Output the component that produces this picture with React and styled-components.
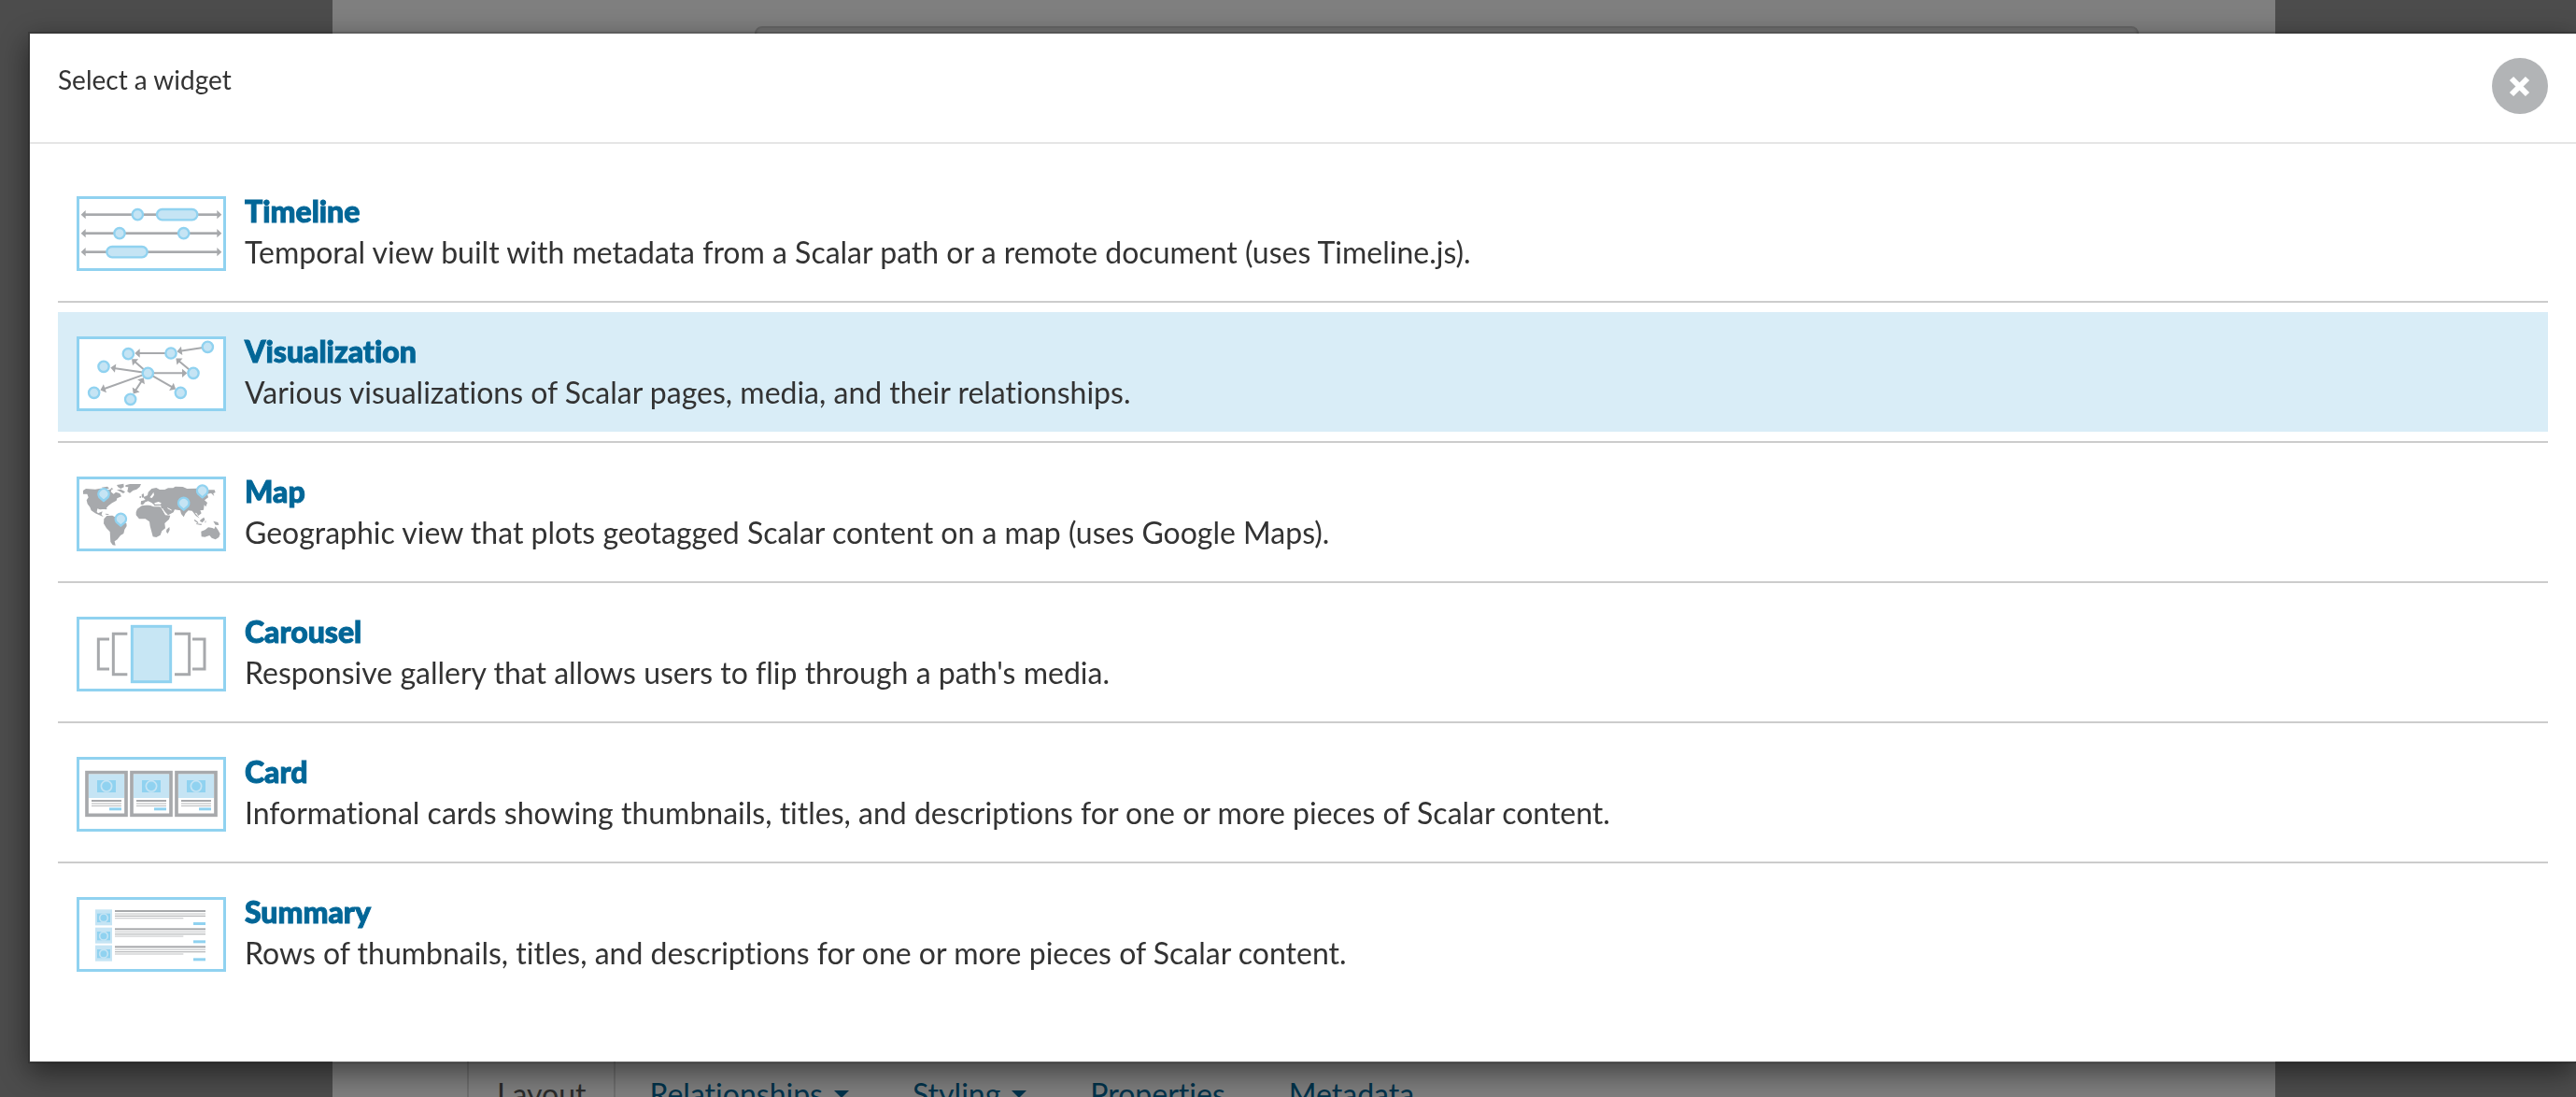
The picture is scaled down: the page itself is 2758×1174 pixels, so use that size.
import React from "react";
import styled, { createGlobalStyle } from "styled-components";

const GREY = "#a7a9ac";
const SKY = "#90d2f0";
const PALE = "#c5e4f4";

const GlobalStyle = createGlobalStyle`
  * { box-sizing: border-box; }
  body {
    margin: 0;
    background: #999;
    color: #333;
    font-family: Lato, "Liberation Sans", sans-serif;
    font-size: 32px;
    font-variant-ligatures: no-common-ligatures;
    line-height: 44px;
  }
`;

/* ---------- editor page behind the dialog ---------- */

const Page = styled.main`
  display: flex;
  flex-direction: column;
  height: 100vh;
  margin: 0 322px 0 356px;
  padding: 28px 146px 0 144px;
  overflow: hidden;
  background: #fff;
`;

const Field = styled.div`
  display: grid;
  flex: 1;
  padding-left: 308px;
`;

const TextArea = styled.textarea`
  width: 100%;
  border: 2px solid #ccc;
  border-radius: 8px;
  background: #eee;
  box-shadow: inset 0 2px 2px rgba(0, 0, 0, 0.08);
  resize: none;
`;

const Tabs = styled.nav`
  display: flex;
  flex: none;
  gap: 4px;
  height: 88px;
  margin-top: 40px;
  margin-bottom: -40px;
`;

const Tab = styled.a`
  display: flex;
  align-items: center;
  gap: 12px;
  padding: 0 30px;
  border: 2px solid ${(p) => (p.$active ? "#ddd" : "transparent")};
  border-bottom: 0;
  border-radius: 8px 8px 0 0;
  color: ${(p) => (p.$active ? "#555" : "#026697")};
  text-decoration: none;
`;

const Caret = styled.span`
  border: 8px solid transparent;
  border-top-color: currentColor;
  border-bottom: 0;
`;

/* ---------- dialog ---------- */

const Backdrop = styled.div`
  position: fixed;
  inset: 0;
  padding: 34px 0 0 30px;
  background: rgba(0, 0, 0, 0.5);
`;

const Dialog = styled.section`
  border: 2px solid rgba(0, 0, 0, 0.2);
  border-right: 0;
  background: #fff;
  background-clip: padding-box;
  box-shadow: 0 10px 30px rgba(0, 0, 0, 0.5);
`;

const Header = styled.header`
  display: flex;
  align-items: flex-start;
  justify-content: space-between;
  padding: 26px 30px 30px;
  border-bottom: 2px solid #e5e5e5;
`;

const Title = styled.h1`
  margin: 0;
  font-size: 28px;
  font-weight: 400;
  line-height: 46px;
`;

const CloseButton = styled.button`
  display: grid;
  place-items: center;
  width: 60px;
  height: 60px;
  padding: 0;
  border: 0;
  border-radius: 50%;
  background: #b2b4b6;
`;

const List = styled.ul`
  margin: 0;
  padding: 30px 30px 74px;
  list-style: none;
`;

const Item = styled.li`
  & + & {
    margin-top: 10px;
    padding-top: 10px;
    border-top: 2px solid #ccc;
  }
`;

const Option = styled.button`
  display: flex;
  align-items: flex-start;
  gap: 20px;
  width: 100%;
  padding: 20px;
  border: 0;
  background: ${(p) => (p.$highlighted ? "#d9edf7" : "transparent")};
  color: inherit;
  font: inherit;
  font-variant-ligatures: inherit;
  text-align: left;
`;

const Thumb = styled.svg`
  flex: none;
  width: 160px;
  height: 80px;
  margin-top: 6px;
  border: 3px solid ${SKY};
  background: #fff;
`;

const Name = styled.strong`
  display: block;
  color: #026697;
  font-weight: 900;
  -webkit-text-stroke: 1px currentColor;
`;

const Description = styled.span`
  display: block;
`;

/* ---------- thumbnails, drawn on a 462 x 222 board ---------- */

const Board = ({ children }) => (
  <Thumb viewBox="45 54 462 222" aria-hidden="true">
    {children}
  </Thumb>
);

const Dot = ({ x, y }) => (
  <circle cx={x} cy={y} r="17" fill={PALE} stroke={SKY} strokeWidth="7" />
);

const Arrow = ({ x1, y1, x2, y2, both }) => {
  const angle = (Math.atan2(y2 - y1, x2 - x1) * 180) / Math.PI;
  return (
    <g fill={GREY}>
      <line x1={x1} y1={y1} x2={x2} y2={y2} stroke={GREY} strokeWidth="6" />
      <path d="M5 0L-11 -14V14Z" transform={`translate(${x2} ${y2}) rotate(${angle})`} />
      {both && <path d="M5 0L-11 -14V14Z" transform={`translate(${x1} ${y1}) rotate(${angle + 180})`} />}
    </g>
  );
};

const TimelineArt = () => (
  <Board>
    {[104, 164, 224].map((y) => (
      <g key={y} fill={GREY}>
        <rect x="60" y={y - 4} width="430" height="8" />
        <path d={`M50 ${y}L65 ${y - 14}V${y + 14}ZM502 ${y}L487 ${y - 14}V${y + 14}Z`} />
      </g>
    ))}
    <Dot x={232} y={104} />
    <Dot x={174} y={164} />
    <Dot x={380} y={164} />
    <g fill={PALE} stroke={SKY} strokeWidth="7">
      <rect x="294" y="87" width="130" height="34" rx="17" />
      <rect x="133" y="207" width="130" height="34" rx="17" />
    </g>
  </Board>
);

const VisualizationArt = () => (
  <Board>
    <Arrow x1={457} y1={79} x2={363} y2={93} />
    <Arrow x1={339} y1={99} x2={228} y2={99} />
    <Arrow x1={411} y1={163} x2={359} y2={119} />
    <Arrow x1={265} y1={163} x2={217} y2={121} />
    <Arrow x1={265} y1={163} x2={150} y2={146} />
    <Arrow x1={265} y1={163} x2={117} y2={216} />
    <Arrow x1={249} y1={182} x2={221} y2={225} both />
    <Arrow x1={265} y1={163} x2={350} y2={212} />
    <Arrow x1={265} y1={163} x2={386} y2={163} />
    {[[457, 79], [339, 99], [202, 101], [123, 142], [92, 226], [209, 247], [370, 226], [411, 163], [265, 163]].map(
      ([x, y]) => <Dot key={`${x}-${y}`} x={x} y={y} />
    )}
  </Board>
);

const Pin = ({ x, y }) => (
  <path
    d={`M${x} ${y + 19}L${x - 14} ${y + 7}A17 17 0 1 1 ${x + 14} ${y + 7}Z`}
    fill={PALE}
    stroke={SKY}
    strokeWidth="7"
    strokeLinejoin="round"
  />
);

const MapArt = () => (
  <Board>
    <g fill={GREY}>
      {/* North America */}
      <path d="M57 90L66 84L96 86L113 83L128 88L142 87L150 82L146 94L155 101L162 95L175 99L180 109L166 115L164 122L150 130L138 139L129 149L111 151L103 148L101 158L105 163L119 157L116 167L122 174L116 172L96 163L83 154L79 143L71 133L68 121L74 112L70 101L57 101Z" />
      <path d="M116 80L135 77L141 83L126 85ZM146 81L154 84L149 88ZM165 72L187 68L188 79L178 84L169 79ZM165 88L178 86L192 94L186 99L174 92ZM117 143L135 148L130 151L117 148ZM128 164L138 165L140 168L130 167Z" />
      {/* Greenland */}
      <path d="M193 73L207 69H243L239 78L229 86L217 90L207 98L199 93L202 79L193 78Z" />
      {/* South America */}
      <path d="M124 181L133 171L151 170L163 177L170 188L196 195L197 204L190 215L187 228L177 234L167 247L158 253L161 266L152 265L145 255L143 222L132 211L123 196Z" />
      {/* Africa */}
      <path d="M231 149L245 139L270 136L284 142L304 142L313 154L321 169L337 170L333 182L319 195L321 211L310 220L305 233L292 240L281 238L276 219L272 204L270 190L257 181L237 181L227 169V159ZM325 215L334 207L335 216L329 228L324 223Z" />
      {/* Europe and Asia */}
      <path d="M242 134L243 124L257 120L250 112L264 105L266 95L277 84L292 81L303 87L319 87L330 82L346 82L353 77L377 78L391 84L423 83L447 88L479 88L482 96L475 99L478 108L468 98L456 101L459 112L447 121L456 129L451 142L446 136L444 152L433 154L437 163L427 171L421 162L416 161L424 170L431 179L419 171L407 155L395 154L386 163L380 175L372 165L369 154L351 151L347 160L330 169L321 160L307 145V138L286 139L278 130L266 124L257 127L249 136Z" />
      <path d="M245 103L251 99L253 111L246 113ZM239 108L244 109L242 114L238 113ZM435 150L440 148L438 153Z" />
      {/* Islands and Australia */}
      <path d="M415 182L427 192L426 196L414 187ZM434 184L445 176L448 184L440 193L432 188ZM475 188L490 192L493 201L482 200ZM448 189L452 187L450 195ZM420 196L439 197L436 201L420 198Z" />
      <path d="M436 221L449 216L459 208L472 210L478 213L482 205L490 216L497 229L493 240L482 247L470 242L463 234L448 239L437 238Z" />
    </g>
    <path d="M256 129L266 125L277 132L284 134L283 140L270 137L257 135ZM286 130L299 126L308 130L306 134L287 134ZM271 112L279 102L283 95L285 104L278 114Z" fill="#fff" />
    <path d="M311 147L322 166M328 146L341 153" stroke="#fff" strokeWidth="3" />
    <Pin x={123} y={104} />
    <Pin x={178} y={184} />
    <Pin x={380} y={133} />
    <Pin x={440} y={93} />
  </Board>
);

const CarouselArt = () => (
  <Board>
    <g fill="none" stroke={GREY} strokeWidth="9">
      <path d="M141 117H106V213H141M199 100H154V230H199M351 100H398V230H351M408 117H447V213H408" />
    </g>
    <rect x="214" y="76" width="124" height="178" fill="#c7e6f4" stroke={SKY} strokeWidth="9" />
  </Board>
);

const CardArt = () => (
  <Board>
    {[0, 144, 288].map((dx) => (
      <g key={dx} transform={`translate(${dx} 0)`}>
        <rect x="69" y="95" width="126" height="137" fill="#fff" stroke={GREY} strokeWidth="11" />
        <rect x="75" y="101" width="114" height="76" fill={PALE} />
        <rect x="102" y="120" width="60" height="39" fill={SKY} />
        <circle cx="132" cy="139" r="17" fill={SKY} stroke={PALE} strokeWidth="5" />
        <rect x="84" y="183" width="96" height="6" fill={GREY} />
        <rect x="84" y="192" width="96" height="6" fill="#d9dadb" />
        <rect x="84" y="201" width="96" height="3" fill="#b9bbbd" />
        <rect x="141" y="208" width="39" height="9" fill={SKY} />
      </g>
    ))}
  </Board>
);

const SummaryArt = () => (
  <Board>
    {[0, 58, 115].map((dy) => (
      <g key={dy} transform={`translate(0 ${dy})`}>
        <rect x="96" y="85" width="54" height="51" fill={PALE} />
        <rect x="102" y="98" width="42" height="28" fill={SKY} />
        <circle cx="123" cy="112" r="13" fill={SKY} stroke={PALE} strokeWidth="5" />
        <rect x="159" y="87" width="291" height="6" fill={GREY} />
        <rect x="159" y="97" width="291" height="4" fill="#d0d1d3" />
        <rect x="159" y="104" width="291" height="4" fill="#babcbe" />
        <rect x="159" y="111" width="220" height="4" fill="#d0d1d3" />
        <rect x="411" y="126" width="39" height="9" fill={SKY} />
      </g>
    ))}
  </Board>
);

const widgets = [
  {
    name: "Timeline",
    description: "Temporal view built with metadata from a Scalar path or a remote document (uses Timeline.js).",
    Art: TimelineArt,
  },
  {
    name: "Visualization",
    description: "Various visualizations of Scalar pages, media, and their relationships.",
    Art: VisualizationArt,
    highlighted: true,
  },
  {
    name: "Map",
    description: "Geographic view that plots geotagged Scalar content on a map (uses Google Maps).",
    Art: MapArt,
  },
  {
    name: "Carousel",
    description: "Responsive gallery that allows users to flip through a path's media.",
    Art: CarouselArt,
  },
  {
    name: "Card",
    description: "Informational cards showing thumbnails, titles, and descriptions for one or more pieces of Scalar content.",
    Art: CardArt,
  },
  {
    name: "Summary",
    description: "Rows of thumbnails, titles, and descriptions for one or more pieces of Scalar content.",
    Art: SummaryArt,
  },
];

const tabs = [
  { label: "Layout", active: true },
  { label: "Relationships", menu: true },
  { label: "Styling", menu: true },
  { label: "Properties" },
  { label: "Metadata" },
];

export default function App() {
  return (
    <>
      <GlobalStyle />
      <Page>
        <Field>
          <TextArea aria-label="Content" />
        </Field>
        <Tabs>
          {tabs.map((tab) => (
            <Tab key={tab.label} href="#" $active={tab.active}>
              {tab.label}
              {tab.menu && <Caret />}
            </Tab>
          ))}
        </Tabs>
      </Page>
      <Backdrop>
        <Dialog role="dialog" aria-modal="true" aria-labelledby="dialog-title">
          <Header>
            <Title id="dialog-title">Select a widget</Title>
            <CloseButton type="button" aria-label="Close">
              <svg width="24" height="24" viewBox="0 0 24 24" aria-hidden="true">
                <path d="M3 4L20 21M20 4L3 21" stroke="#fff" strokeWidth="6" />
              </svg>
            </CloseButton>
          </Header>
          <List>
            {widgets.map(({ name, description, Art, highlighted }) => (
              <Item key={name}>
                <Option type="button" $highlighted={highlighted}>
                  <Art />
                  <span>
                    <Name>{name}</Name>
                    <Description>{description}</Description>
                  </span>
                </Option>
              </Item>
            ))}
          </List>
        </Dialog>
      </Backdrop>
    </>
  );
}
